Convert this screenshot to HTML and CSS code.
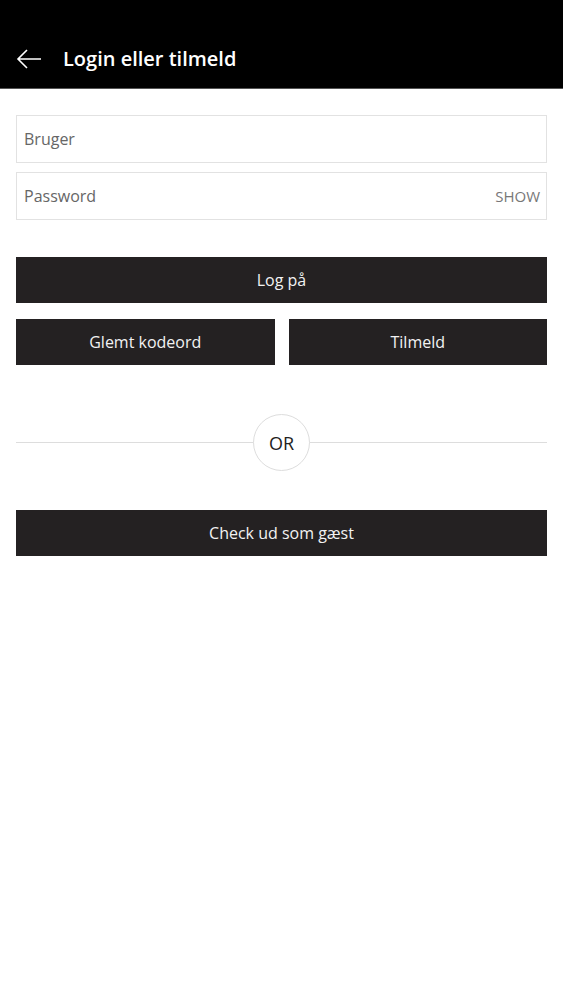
FILE: index.html
```html
<!DOCTYPE html>
<html>
<head>
  <title>Login eller tilmeld</title>
  <link rel="stylesheet" href="styles.css">
</head>
<body>
  <header class="topbar">
    <svg class="back" width="26" height="22" viewBox="0 0 26 22">
      <path d="M25 11H2M11 2L2 11l9 9" fill="none" stroke="#fff" stroke-width="1.6"/>
    </svg>
    <h1>Login eller tilmeld</h1>
  </header>

  <form class="login">
    <div class="field">
      <input type="text" placeholder="Bruger">
    </div>
    <div class="field">
      <input type="password" placeholder="Password">
      <span class="show">SHOW</span>
    </div>

    <button type="button" class="btn btn-main">Log på</button>
    <div class="btn-row">
      <button type="button" class="btn">Glemt kodeord</button>
      <button type="button" class="btn">Tilmeld</button>
    </div>

    <div class="divider">
      <span class="or">OR</span>
    </div>

    <button type="button" class="btn btn-guest">Check ud som gæst</button>
  </form>
</body>
</html>
```

FILE: styles.css
```css
body {
  margin: 0;
  font-family: "Open Sans", "Noto Sans", sans-serif;
  background: #fff;
}

.topbar {
  height: 89px;
  background: #000;
  display: flex;
  align-items: flex-end;
  padding: 0 16px 17px;
  box-sizing: border-box;
  border-bottom: 1px solid #555;
}

.back {
  margin-bottom: 1px;
}

.topbar h1 {
  margin: 0 0 0 21px;
  color: #fff;
  font-size: 20px;
  font-weight: 600;
  line-height: 24px;
}

.login {
  padding: 26px 16px 0 16px;
}

.field {
  height: 48px;
  border: 1px solid #e2e2e2;
  box-sizing: border-box;
  display: flex;
  align-items: center;
  margin-bottom: 9px;
}

.field input {
  flex: 1;
  border: none;
  outline: none;
  font-family: inherit;
  font-size: 16px;
  padding: 0 7px;
  color: #333;
  background: transparent;
}

.field input::placeholder {
  color: #666;
}

.show {
  font-size: 15px;
  color: #777;
  padding-right: 6px;
}

.btn {
  display: block;
  width: 100%;
  height: 46px;
  border: none;
  background: #242122;
  color: #f2f2f2;
  font-family: inherit;
  font-size: 16px;
  cursor: pointer;
}

.btn-main {
  margin-top: 37px;
}

.btn-row {
  display: flex;
  gap: 14px;
  margin-top: 16px;
}

.divider {
  margin-top: 49px;
  height: 57px;
  display: flex;
  justify-content: center;
  align-items: center;
  background: linear-gradient(#ddd, #ddd) center / 100% 1px no-repeat;
}

.or {
  width: 55px;
  height: 55px;
  border: 1px solid #ddd;
  border-radius: 50%;
  background: #fff;
  display: flex;
  align-items: center;
  justify-content: center;
  font-size: 18px;
  color: #222;
}

.btn-guest {
  margin-top: 39px;
}
```
